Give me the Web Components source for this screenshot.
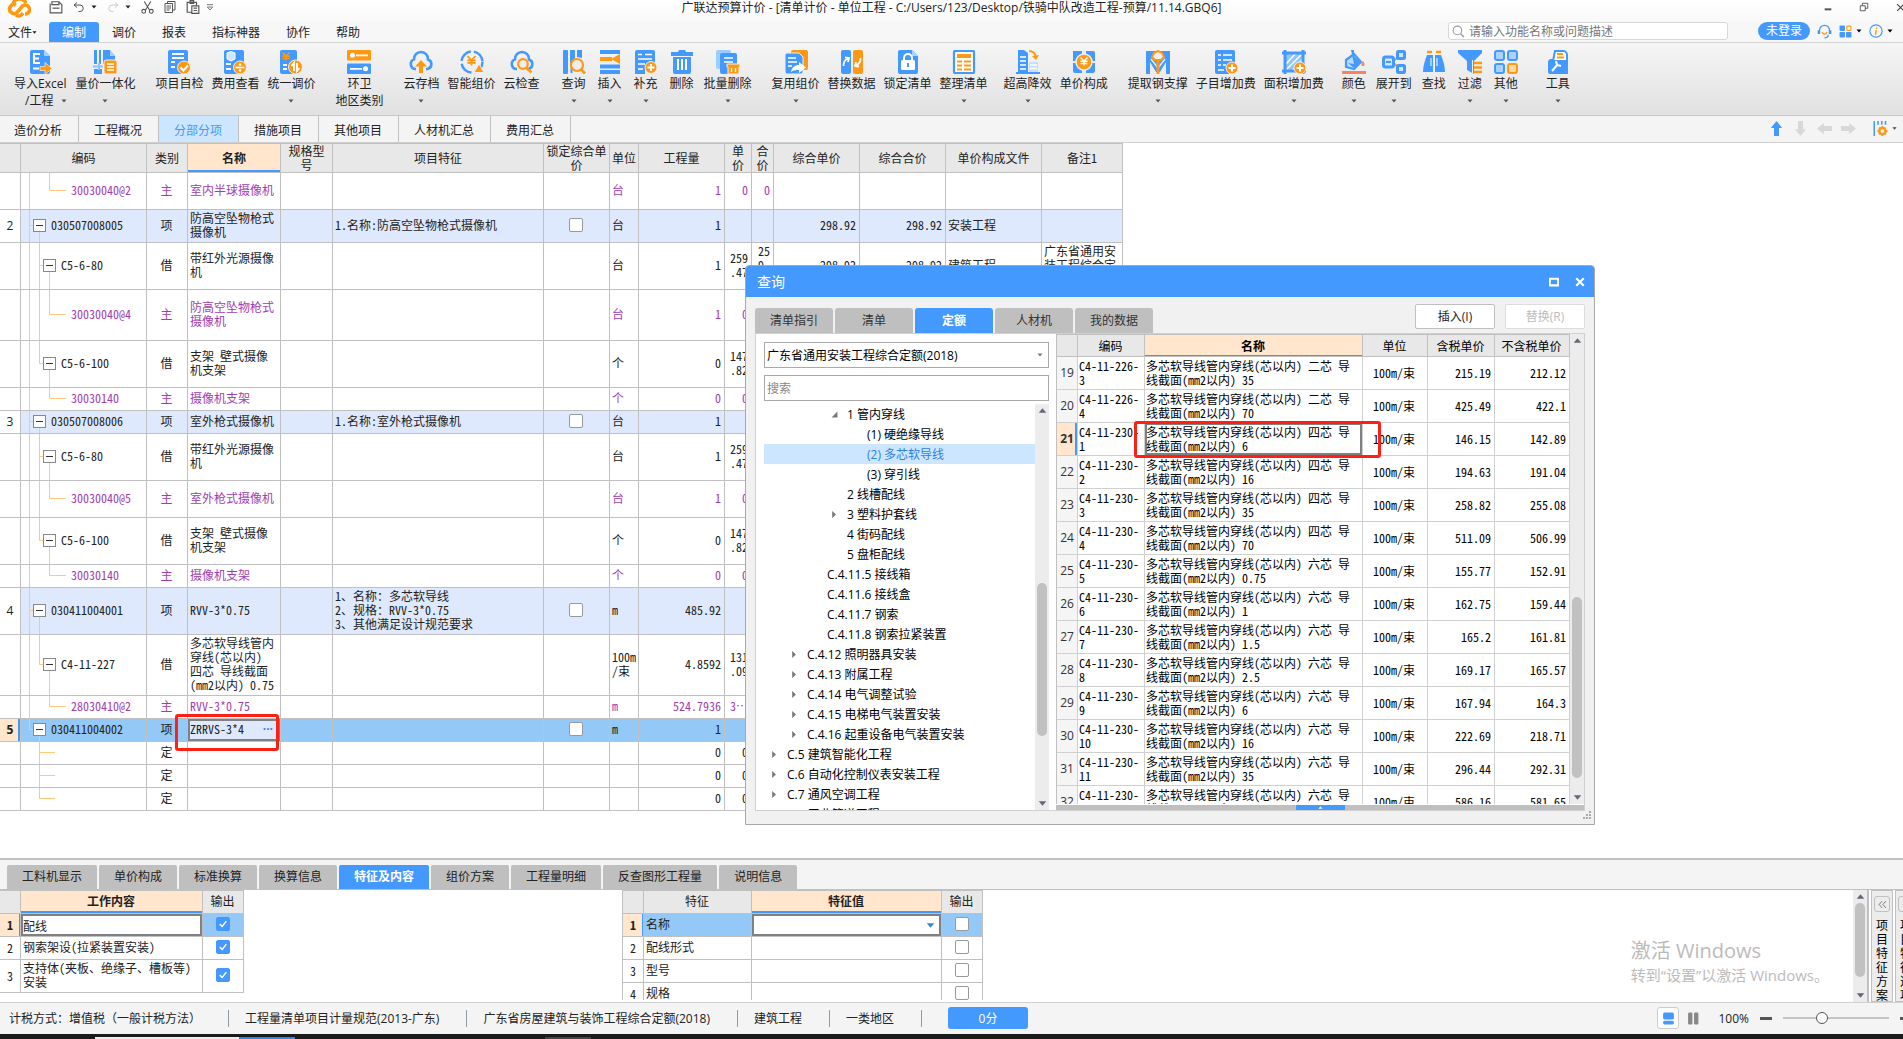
<!DOCTYPE html>
<html lang="zh-CN">
<head>
<meta charset="utf-8">
<title>广联达预算计价</title>
<style>
html,body{margin:0;height:100%}
body{
  --ui:"Open Sans","Noto Sans CJK SC",sans-serif;
  --grid:"Noto Sans Mono CJK SC","Noto Sans CJK SC",monospace;
  --blue:#4499ff;--orange:#ff9914;--line:#c0c0c0;--head:#e8e8e8;--peach:#ffe6cc;--item:#dee9fd;--pick:#93c8f7;
  font:12px/17px var(--ui);color:#222;overflow:hidden;background:#fff
}
</style>
</head>
<body>
<gd-app></gd-app>
<script>
const B = '#4499ff', O = '#ff9914';
const base = `*{box-sizing:border-box}:host{display:block}button,input,select{font:inherit;color:inherit;margin:0;padding:0;border:0;background:none;outline:0}
.cb{appearance:none;width:14px;height:14px;border:1px solid #999;border-radius:2px;background:#fff;display:block;margin:auto}
.cb:checked{border-color:${B};background:${B}}
table{border-collapse:separate;border-spacing:0;table-layout:fixed;font:12px/14px var(--grid)}
td,th{padding:0 3px 0 2px;border-right:1px solid var(--line);border-bottom:1px solid var(--line);font-weight:400;text-align:left;white-space:pre-line;overflow-wrap:anywhere}
th{background:var(--head);text-align:center}th.on{background:var(--peach);font-weight:700;box-shadow:inset 0 -2px ${B}}
.r{text-align:right}.c{text-align:center}`;

function define(tag, css, html) {
  customElements.define(tag, class extends HTMLElement {
    connectedCallback() {
      if (this.shadowRoot) return;
      const root = this.attachShadow({mode: 'open'});
      const t = document.createElement('template');
      t.innerHTML = `<style>${base}${css}</style>` + (typeof html === 'function' ? html(this) : html);
      root.append(t.content.cloneNode(true));
    }
  });
}

/* ---------- icons ---------- */
const doc = `<path fill="${B}" d="M4 0h12l6 6v16a2 2 0 0 1-2 2H4a2 2 0 0 1-2-2V2a2 2 0 0 1 2-2z"/>`;
const sheet = `<rect x="1" width="20" height="24" rx="2" fill="${B}"/>`;
const yen = (x, y, s, c) => `<path d="M${x-s} ${y-s}l${s} ${s}l${s}-${s}M${x} ${y}v${s*1.3}M${x-s} ${y+.2}h${s*2}M${x-s} ${y+s*.7}h${s*2}" fill="none" stroke="${c}" stroke-width="1.4"/>`;
const plus = (x, y) => `<circle cx="${x}" cy="${y}" r="6" fill="${O}" stroke="#eee"/><path d="M${x-3.5} ${y}h7M${x} ${y-3.5}v7" stroke="#fff" stroke-width="2"/>`;
const cloud = `<path d="M7 19H6a5 5 0 0 1-1-9.600A7 7 0 0 1 12 2a7 7 0 0 1 7 7.400A5 5 0 0 1 18.500 19H17" fill="none" stroke="${B}" stroke-width="2.600"/>`;
const ICONS = {
  import: doc + `<path fill="#a8d2ff" d="M16 0l6 6h-6z"/><path d="M12 4H6v9h6M6 8.500h5" fill="none" stroke="#fff" stroke-width="2"/><path d="M5 18.500h6" stroke="#fff" stroke-width="2"/><path fill="${O}" stroke="#eee" stroke-width=".7" d="M12 16.500h5v-4l7 6-7 6v-4h-5z"/>`,
  volume: `<path fill="${B}" d="M1 0h3v14H1zM1 19h8v5H1zM6 0h2v14H6zM10 0h7l5 6v8H10z"/><path fill="#a8d2ff" d="M17 0l5 6h-5z"/><path d="M0 16.500h10M6 13v7" stroke="#8cc2ff" stroke-width="2"/><rect x="11" y="10" width="13" height="14" rx="2" fill="${O}" stroke="#eee"/><path d="M14 14h7M14 17h7M14 20h7" stroke="#fff" stroke-width="1.600"/>`,
  check: sheet + `<path d="M5 4h12M5 8h12M4 12h4M4 17h4" stroke="#fff" stroke-width="2"/><circle cx="17" cy="17.500" r="6.500" fill="${O}" stroke="#eee"/><path d="M13.500 17.500l3 3 4.500-5" fill="none" stroke="#fff" stroke-width="2"/>`,
  fee: sheet + `<path fill="#cfe6ff" stroke="#fff" d="M4 3l4-1.500 4 1.500v6l-4 2-4-2z"/><path d="M3 14h5M3 19h5" stroke="#fff" stroke-width="1.800"/><circle cx="17" cy="17.500" r="6.500" fill="${O}" stroke="#eee"/><path d="M12.500 17.500h9" stroke="#fff" stroke-width="1.800"/><circle cx="17" cy="14.500" r="1.300" fill="#fff"/><circle cx="17" cy="20.500" r="1.300" fill="#fff"/>`,
  adjust: sheet.replace('width="20"','width="17"') + yen(7, 6, 3.500, O) + `<path d="M4 15h4M4 19h4" stroke="#fff" stroke-width="1.800"/><circle cx="16.500" cy="17" r="7" fill="${O}" stroke="#eee"/><path d="M15 21v-8l-2.500 3M18 13v8l2.500-3" fill="none" stroke="#fff" stroke-width="1.800"/>`,
  env: `<rect y="0" width="24" height="10.500" rx="1" fill="${O}"/><rect y="13.500" width="24" height="10.500" rx="1" fill="${B}"/><circle cx="5.500" cy="5.300" r="2.500" fill="#fff"/><path d="M9 5.300h12M3 18.800h12" stroke="#fff" stroke-width="1.800"/><circle cx="18.500" cy="18.800" r="2.500" fill="#fff"/>`,
  cloudup: cloud + `<path fill="${O}" d="M12 10l6 6.500h-4V23h-4v-6.500H6z"/>`,
  smart: `<circle cx="12" cy="12" r="10.500" fill="none" stroke="${B}" stroke-width="2.400" stroke-dasharray="14 3"/>` + yen(11.500, 10, 4, O) + yen(11.500, 10.300, 4, O) + `<path fill="${O}" stroke="#eee" d="M19 14l5 8.500h-10z"/>`,
  cloudfind: cloud + `<circle cx="13" cy="14" r="4.800" fill="#eee" stroke="${O}" stroke-width="2.200"/><path d="M16.500 18l5 4.500" stroke="${O}" stroke-width="2.600"/>`,
  query: `<rect x="1" width="5" height="24" rx="1" fill="${B}"/><path fill="${B}" d="M8 0h5v9l-5 5zM15 0h5v8l-5-1z"/><path d="M9.500 14v9" stroke="${B}" stroke-width="2"/><circle cx="15" cy="15" r="6" fill="#eee" stroke="${O}" stroke-width="2.200"/><path d="M19 19.500l4 4" stroke="${O}" stroke-width="2.600"/>`,
  insert: `<path d="M2 2h20M2 16.500h20M2 22h20" stroke="${B}" stroke-width="4"/><path d="M2 9h12" stroke="${O}" stroke-width="4"/><path fill="${O}" d="M13 9l9-5v10z"/>`,
  add: `<rect x="1" width="20" height="16" rx="2" fill="${B}"/><rect x="1" y="14" width="10" height="10" fill="${B}"/><path d="M4 4.500h4M11 4.500h7M4 9h14M4 14h7M4 19h5" stroke="#fff" stroke-width="1.500"/>` + plus(17, 17.500),
  del: `<path fill="${B}" d="M1 2h7l1-2h6l1 2h7v4H1zM3 7h18v15a2 2 0 0 1-2 2H5a2 2 0 0 1-2-2z"/><path d="M8 9v11M12 9v11M16 9v11" stroke="#fff" stroke-width="2"/>`,
  batchdel: `<rect width="15" height="19" rx="2" fill="#9dccff"/><rect x="4" y="3" width="17" height="21" rx="2" fill="${B}"/><path d="M8 8h9M8 12h9" stroke="#fff" stroke-width="1.600"/><path fill="${O}" stroke="#eee" d="M11 14h13v3h-1v7H12v-7h-1z"/><path d="M15.500 18v4M19.500 18v4" stroke="#fff" stroke-width="1.300"/>`,
  reuse: `<rect x="7" width="17" height="20" rx="2" fill="${O}"/><path fill="${B}" stroke="#eee" d="M3 3h12l4 4v15a2 2 0 0 1-2 2H3a2 2 0 0 1-2-2V5a2 2 0 0 1 2-2z"/><path d="M4 8h8M4 12h9M4 16h4" stroke="#fff" stroke-width="1.700"/><path fill="#fff" d="M7 22c1-5 4-7 8-7v-3l7 5.500-7 5.500v-3c-3 0-5 0-8 2z"/>`,
  replace: `<rect x="1" width="10" height="24" rx="2" fill="${B}"/><rect x="13" width="10" height="24" rx="2" fill="${O}"/><path d="M3.500 16c0-4 1-6 4-7M5 7.500l4 .5-1 4M20.500 8c0 4-1 6-4 7M19 16.500l-4-.5 1-4" fill="none" stroke="#fff" stroke-width="1.800"/>`,
  lock: doc + `<path fill="#a8d2ff" d="M16 0l6 6h-6z"/><rect x="5" y="10" width="14" height="10" rx="1.500" fill="#fff"/><path d="M8 11V8a4 4 0 0 1 8 0v3" fill="none" stroke="#fff" stroke-width="2"/><path d="M12 13v4" stroke="${B}" stroke-width="2"/>`,
  tidy: `<rect x="2" y="1" width="20" height="22" rx="1" fill="#fff" stroke="${B}" stroke-width="2.200"/><path d="M5 6h14" stroke="${O}" stroke-width="4"/><path d="M5 11.500h5M12 11.500h7M5 15.500h5M12 15.500h7M5 19.500h5M12 19.500h7" stroke="${O}" stroke-width="2"/>`,
  high: `<path fill="${B}" d="M2 0h6l4 3v19H2z"/><path d="M4 7h6M4 11h6M4 15h6M4 19h6" stroke="#fff" stroke-width="1.600"/><path fill="#c2e0ff" d="M13 12h9v10h-9z"/><path d="M14 15h7M14 18.500h7" stroke="#fff" stroke-width="1.300"/><path d="M0 23h24" stroke="${B}" stroke-width="2"/><path d="M13 1c4 0 6 2 7 6" fill="none" stroke="${O}" stroke-width="2"/><path fill="${O}" d="M16 6l7-1-3 5z"/>`,
  compose: `<path fill="${B}" d="M1 1h9v22H3a2 2 0 0 1-2-2zM14 1h7a2 2 0 0 1 2 2v18a2 2 0 0 1-2 2h-7z"/><path d="M0 12h24M12 0v24" stroke="#e9e9e9" stroke-width="2"/><circle cx="12" cy="12" r="8" fill="${O}" stroke="#eee" stroke-width="1.500"/>` + yen(12, 11, 3.500, '#fff'),
  steel: `<path fill="${B}" d="M0 1h24v23h-4V12l-6 10h-4L4 12v12H0z"/><path d="M12 24V12M5 9l7 9 7-9" fill="none" stroke="#eee" stroke-width="1.400"/><path d="M12 24V11" stroke="${O}" stroke-width="3"/><path fill="#eee" stroke="${O}" stroke-width="2" d="M8 3l4-2 4 2 2 4-3 3H9L6 7z"/>`,
  sub: sheet + `<path d="M4 5h3M9 5h9M4 10h3M9 10h9M4 15h3M9 15h3M4 20h6" stroke="#fff" stroke-width="1.600"/>` + plus(18, 18),
  area: `<path fill="#8fc4ff" d="M3 3h18v18H3z"/><path d="M4 14L14 3M4 20L20 4M10 21l11-12" stroke="#fff" stroke-width="1.500"/><path d="M3 0v24M21 0v24M0 3h24M0 21h24" stroke="${B}" stroke-width="3"/>` + plus(18, 18),
  color: `<path fill="#b9dbff" stroke="${B}" stroke-width="2.200" d="M4 10l8-6 7 8-7 7-8-2z"/><path fill="${B}" d="M9 0h3v6l6 6-6 6-6-5 6 1z"/><path fill="#f4845f" d="M21 11c2 3 2 5 0 5s-2-2 0-5z"/><path d="M0 22.500h24" stroke="#f4845f" stroke-width="3"/>`,
  expand: `<path d="M10 12L19 5M10 12l9 7" stroke="${O}" stroke-width="2"/><g fill="#cfe6ff" stroke="${B}" stroke-width="3"><rect x="1.500" y="7" width="10" height="10" rx="2"/><rect x="15.500" y="1.500" width="7" height="7" rx="1"/><rect x="15.500" y="15.500" width="7" height="7" rx="1"/></g><path d="M4 12h5" stroke="${B}" stroke-width="2"/>`,
  find: `<path fill="${B}" d="M5 5h6v17H1C1 16 3 10 5 5zM13 5h6c2 5 4 11 4 17H13z"/><path d="M5 2h5M14 2h5" stroke="${O}" stroke-width="2.600"/><path d="M9 8v8M15 8v8" stroke="#fff"/>`,
  filter: `<path fill="${B}" d="M0 0h24v3l-8 8v13l-7-4v-9L0 3z"/><path d="M16 13h8M16 17.500h8M16 22h8" stroke="${O}" stroke-width="2.400"/><path d="M14.500 10v14" stroke="#eee"/>`,
  other: `<g fill="#a8d2ff" stroke="${B}" stroke-width="2"><rect x="1" y="1" width="9" height="9" rx="2"/><rect x="14" y="1" width="9" height="9" rx="2"/><rect x="1" y="14" width="9" height="9" rx="2"/><rect x="14" y="14" width="9" height="9" rx="2" fill="#ffd9a3" stroke="${O}"/></g>`,
  tool: `<path fill="${B}" d="M4 9h16a2 2 0 0 1 2 2v13H4a2 2 0 0 1-2-2V11z"/><path fill="#fff" stroke="${B}" stroke-width="2" d="M9 1h8a4 4 0 0 1 4 4v6H7z"/><path d="M11 4h6M11 7.500h7" stroke="${O}" stroke-width="1.800"/><path d="M6 21l6-7M10 11l1 4 4 1" fill="none" stroke="#fff" stroke-width="2"/>`,
  logo: `<path d="M9 10a4.500 4.500 0 1 0 1 7.500l6-7a4.500 4.500 0 1 1 2 8.500M6 9a7 7 0 0 1 13-1M9 20c3 2 5 1 7-2" fill="none" stroke="${O}" stroke-width="3.600"/>`,
  save: `<path d="M2 6V22h20V8l-5-5H5v5h12V3" fill="none" stroke="#555" stroke-width="2"/><path d="M6 14h12" stroke="#555" stroke-width="2"/>`,
  undo: `<path d="M8 3L2 8l6 5M2 8h12a6 6 0 0 1 0 13h-3" fill="none" stroke="#555" stroke-width="2"/>`,
  redo: `<path d="M16 3l6 5-6 5M22 8H10a6 6 0 0 0 0 13h3" fill="none" stroke="#ccc" stroke-width="2"/>`,
  cut: `<path d="M6 1l10 16M18 1L8 17" stroke="#555" stroke-width="2"/><circle cx="5" cy="19" r="3.500" fill="none" stroke="#555" stroke-width="2"/><circle cx="19" cy="19" r="3.500" fill="none" stroke="#555" stroke-width="2"/>`,
  copy: `<path d="M7 4V1h15v17h-4M2 5h15v18H2zM5 10h9M5 14h9M5 18h6" fill="none" stroke="#555" stroke-width="2"/>`,
  paste: `<path d="M9 21H2V4h16v5M7 1h6v5H7zM10 10h12v13H10zM13 14h6M13 18h6" fill="none" stroke="#555" stroke-width="2"/>`,
  more: `<path d="M3 5h18" stroke="#777" stroke-width="3"/><path d="M4 12h16l-8 9z" fill="none" stroke="#777" stroke-width="3"/>`,
  min: `<path d="M2 16h20" stroke="#555" stroke-width="6"/>`,
  restore: `<path d="M3 9h12v12H3zM8 9V3h13v12h-6" fill="none" stroke="#444" stroke-width="2"/>`,
  close: `<path d="M3 3l18 18M21 3L3 21" stroke="#444" stroke-width="3"/>`,
  wmax: `<path d="M2 4h20v16H2z" fill="none" stroke="#fff" stroke-width="5"/>`,
  wclose: `<path d="M3 3l18 18M21 3L3 21" stroke="#fff" stroke-width="5"/>`,
  search: `<circle cx="10" cy="10" r="8" fill="none" stroke="#999" stroke-width="2"/><path d="M16 16l6 6" stroke="#999" stroke-width="2.500"/>`,
  headset: `<path d="M4 15V10a8 8 0 0 1 16 0v5M18 17c0 4-3 5-6 5" fill="none" stroke="${B}" stroke-width="2"/><path d="M3 10v6M21 10v6" stroke="${B}" stroke-width="4"/><path d="M8 13c2 4 6 4 8 0" fill="none" stroke="${O}" stroke-width="2"/>`,
  apps: `<rect x="1" y="1" width="10" height="10" rx="1.500" fill="${B}"/><rect x="1" y="13" width="10" height="10" rx="1.500" fill="${B}"/><rect x="13" y="13" width="10" height="10" rx="1.500" fill="${B}"/><rect x="14.500" y="2" width="7.500" height="8" rx="1" fill="none" stroke="${O}" stroke-width="2"/>`,
  info: `<circle cx="12" cy="12" r="10.500" fill="none" stroke="${B}" stroke-width="2"/><circle cx="13" cy="7" r="1.500" fill="${O}"/><path d="M12.500 10.500l-1.500 8" stroke="${O}" stroke-width="2.500"/>`,
  up: `<path fill="${B}" d="M12 0l9 11h-5v13H8V11H3z"/>`,
  down: `<path fill="#d8d8d8" d="M12 24l9-11h-5V0H8v13H3z"/>`,
  left: `<path fill="#d8d8d8" d="M0 12l11-9v5h13v8H11v5z"/>`,
  right: `<path fill="#d8d8d8" d="M24 12l-11-9v5H0v8h13v5z"/>`,
  colset: `<path d="M2 0v24" stroke="${B}" stroke-width="2.500"/><path d="M8 0v6M14 0v6M20 0v6" stroke="${B}" stroke-width="2.500"/><circle cx="15" cy="16" r="5" fill="none" stroke="${O}" stroke-width="4"/><path d="M15 8v3M15 21v3M7 16h3M20 16h3M9.500 10.500l2 2M20.500 10.500l-2 2M9.500 21.500l2-2M20.500 21.500l-2-2" stroke="${O}" stroke-width="3"/>`,
  stack: `<rect x="2" y="1" width="20" height="13" rx="3" fill="${B}"/><rect x="2" y="16" width="20" height="7" rx="3" fill="${B}"/>`,
  cols: `<rect x="2" y="1" width="8" height="22" rx="2" fill="#888"/><rect x="13" y="1" width="8" height="22" rx="2" fill="#888"/>`,
  caret: `<path fill="currentColor" d="M2 6h20L12 18z"/>`,
  caretup: `<path fill="currentColor" d="M2 18h20L12 6z"/>`,
  caretr: `<path fill="currentColor" d="M4 0v24l13-12z"/>`,
  open: `<path fill="currentColor" d="M22 2v20H2z"/>`,
  tick: `<path d="M4 12l6 6L20 5" fill="none" stroke="#fff" stroke-width="3.500"/>`,
  chev: `<path d="M11 3l-8 9 8 9M21 3l-8 9 8 9" fill="none" stroke="#555" stroke-width="2"/>`
};
define('gd-icon', ':host{display:inline-block;flex:none;line-height:0}svg{display:block}',
  el => { const s = el.getAttribute('size') || 24; return `<svg width="${s}" height="${s}" viewBox="0 0 24 24" aria-hidden="true">${ICONS[el.getAttribute('name')]}</svg>`; });

/* ---------- title bar ---------- */
define('gd-title-bar', `:host{height:22px;background:linear-gradient(#fff,#f9f9f9);overflow:hidden}
.bar{display:grid;grid-template-columns:1fr auto 1fr;grid-template-rows:14px;height:22px;align-items:center}
.q{display:flex;align-items:center;padding-left:7px;height:14px}.q button{display:flex}
.q .s{margin-left:18px}.q .g{margin-left:10px}.q .n{margin-left:6px}
.w{display:flex;justify-content:flex-end;gap:27px;align-items:center;margin-right:-2px}`,
  `<div class="bar"><div class="q"><gd-icon name="logo"></gd-icon>
  <button class="s" aria-label="保存"><gd-icon name="save" size="14"></gd-icon></button>
  <button class="g" aria-label="撤销"><gd-icon name="undo" size="12"></gd-icon></button><button class="n" aria-label="撤销列表"><gd-icon name="caret" size="6"></gd-icon></button>
  <button class="g" aria-label="重做"><gd-icon name="redo" size="12"></gd-icon></button><button class="n" aria-label="重做列表"><gd-icon name="caret" size="6"></gd-icon></button>
  <button class="g" aria-label="剪切"><gd-icon name="cut" size="13"></gd-icon></button>
  <button class="g" aria-label="复制"><gd-icon name="copy" size="12"></gd-icon></button>
  <button class="g" aria-label="粘贴"><gd-icon name="paste" size="14"></gd-icon></button>
  <button class="n" aria-label="自定义"><gd-icon name="more" size="8"></gd-icon></button></div>
  <div>广联达预算计价 - [清单计价 - 单位工程 - C:/Users/123/Desktop/铁骑中队改造工程-预算/11.14.GBQ6]</div>
  <div class="w"><button aria-label="最小化"><gd-icon name="min" size="8"></gd-icon></button><button aria-label="还原"><gd-icon name="restore" size="10"></gd-icon></button><button aria-label="关闭"><gd-icon name="close" size="9"></gd-icon></button></div></div>`);

/* ---------- menu ---------- */
define('gd-menu-bar', `:host{height:21px;border-bottom:1px solid #d4d4d4;background:#f7f7f7}
.bar{display:flex;height:20px;align-items:stretch}
button{padding:0 13px}.f{padding:0 12px 0 8px;display:flex;align-items:center}.on{background:var(--blue);color:#fff;border-radius:3px 3px 0 0}
.rt{margin-left:auto;display:flex;align-items:center;padding:0 10px 2px 0}
label{display:flex;align-items:center;gap:4px;width:280px;height:18px;border:1px solid #d8d8d8;border-radius:3px;background:#fff;padding:0 3px;margin-right:30px}
input{flex:1;min-width:0}input::placeholder{color:#777;opacity:1}
.lg{height:18px;background:var(--blue);color:#fff;border-radius:9px;padding:0 8px;line-height:18px}.i,.v{padding:0;display:flex;margin-left:7px;color:#000}.v{margin-left:4px}`,
  `<nav class="bar"><button class="f">文件<gd-icon name="caret" size="5"></gd-icon></button><button class="on">编制</button><button>调价</button><button>报表</button><button>指标神器</button><button>协作</button><button>帮助</button>
  <div class="rt"><label><gd-icon name="search" size="13"></gd-icon><input aria-label="搜索功能" placeholder="请输入功能名称或问题描述"></label>
  <button class="lg">未登录</button><button class="i" aria-label="客服"><gd-icon name="headset" size="15"></gd-icon></button><button class="i" aria-label="应用"><gd-icon name="apps" size="13"></gd-icon></button><button class="v" aria-label="应用列表"><gd-icon name="caret" size="6"></gd-icon></button><button class="i" aria-label="帮助信息"><gd-icon name="info" size="14"></gd-icon></button><button class="v" aria-label="帮助列表"><gd-icon name="caret" size="6"></gd-icon></button></div></nav>`);

/* ---------- ribbon ---------- */
define('gd-tool', `:host{display:block}button{display:flex;flex-direction:column;align-items:center;padding:0 4px;min-width:36px;white-space:nowrap;line-height:17px}
.l{margin-top:1px}.b{display:flex;align-items:center;gap:8px;height:17px;color:#555}.t{color:#222}.x{margin-left:12px}`,
  el => `<button><gd-icon name="${el.getAttribute('icon')}"></gd-icon><span class="l"><slot></slot></span>${el.hasAttribute('menu') || el.hasAttribute('sub') ? `<span class="b">${el.hasAttribute('sub') ? `<span class="t${el.hasAttribute('menu') ? ' x' : ''}">${el.getAttribute('sub')}</span>` : ''}${el.hasAttribute('menu') ? '<gd-icon name="caret" size="6"></gd-icon>' : ''}</span>` : ''}</button>`);
const T = (i, n, m, s) => `<gd-tool icon="${i}"${m ? ' menu' : ''}${s ? ` sub="${s}"` : ''}>${n}</gd-tool>`;
define('gd-ribbon', `:host{height:73px;border-bottom:1px solid #c8c8c8;background:linear-gradient(#f5f5f5,#e1e1e1)}
.bar{display:flex;padding:7px 0 0 9px}.g{display:flex;margin-right:12px}.s{margin-right:8px}.m{margin-right:16px}`,
  `<div class="bar"><div class="g">${T('import','导入Excel',1,'/工程')}${T('volume','量价一体化',1)}</div>
  <div class="g">${T('check','项目自检')}${T('fee','费用查看')}${T('adjust','统一调价',1)}</div>
  <div class="g">${T('env','环卫',0,'地区类别')}</div>
  <div class="g">${T('cloudup','云存档',1)}${T('smart','智能组价')}${T('cloudfind','云检查')}</div>
  <div class="g">${T('query','查询',1)}${T('insert','插入',1)}${T('add','补充',1)}${T('del','删除')}${T('batchdel','批量删除',1)}</div>
  <div class="g s">${T('reuse','复用组价',1)}${T('replace','替换数据')}${T('lock','锁定清单')}${T('tidy','整理清单',1)}</div>
  <div class="g">${T('high','超高降效',1)}${T('compose','单价构成')}</div>
  <div class="g s">${T('steel','提取钢支撑',1)}${T('sub','子目增加费')}${T('area','面积增加费',1)}</div>
  <div class="g m">${T('color','颜色',1)}${T('expand','展开到',1)}${T('find','查找')}${T('filter','过滤',1)}${T('other','其他',1)}</div>
  <div class="g">${T('tool','工具',1)}</div></div>`);

/* ---------- page tabs ---------- */
define('gd-page-tabs', `:host{height:27px;border-bottom:1px solid #d0d0d0;background:#f4f4f4}
.bar{display:flex;height:26px}.t{padding:3px 16px 0 15px;border-right:1px solid var(--line)}.t:first-child{padding-left:14px}.on{background:#cce6ff;color:var(--blue)}
.rt{margin-left:auto;display:flex;align-items:center;gap:9px;padding:0 6px 2px 0;color:#444}.rt button{display:flex}.rt .k{gap:4px;display:flex;padding-left:8px;align-items:center}`,
  `<nav class="bar"><button class="t">造价分析</button><button class="t">工程概况</button><button class="t on">分部分项</button><button class="t">措施项目</button><button class="t">其他项目</button><button class="t">人材机汇总</button><button class="t">费用汇总</button>
  <div class="rt"><button aria-label="上移"><gd-icon name="up" size="15"></gd-icon></button><button aria-label="下移"><gd-icon name="down" size="15"></gd-icon></button><button aria-label="后退"><gd-icon name="left" size="15"></gd-icon></button><button aria-label="前进"><gd-icon name="right" size="15"></gd-icon></button><button class="k" aria-label="列设置"><gd-icon name="colset" size="15"></gd-icon><gd-icon name="caret" size="5"></gd-icon></button></div></nav>`);

/* ---------- bill sheet ---------- */
/* g: guide lines as x + mode (f full, t top half, b bottom half); h: horizontal branch from,to */
const V = {
  leaf: {g:[[8,'f'],[28,'t']], h:[28,45], lv:3}, leafm: {g:[[8,'f'],[18,'f'],[28,'t']], h:[28,45], lv:3},
  item: {g:[[8,'f'],[18,'b']], h:[8,12], lv:1}, itemz: {g:[[8,'t'],[18,'b']], h:[8,12], lv:1},
  sub: {g:[[8,'f'],[18,'f'],[28,'b']], h:[18,22], lv:2}, subz: {g:[[8,'f'],[18,'t'],[28,'b']], h:[18,22], lv:2},
  gap: {g:[[18,'f']], h:[18,34], lv:4}, gapz: {g:[[18,'t']], h:[18,34], lv:4}
};
const ROWS = [
  [37,'leaf','','30030040@2','主','室内半球摄像机','','台','1','0','0'],
  [33,'item','2','030507008005','项','防高空坠物枪式摄像机','1.名称:防高空坠物枪式摄像机','台','1','','','298.92','298.92','安装工程'],
  [47,'sub','','C5-6-80','借','带红外光源摄像机','','台','1','259\n.47','25\n9.\n47','298.92','298.92','建筑工程','广东省通用安装工程综合定额(2018)'],
  [51,'leafm','','30030040@4','主','防高空坠物枪式摄像机','','台','1','0'],
  [47,'subz','','C5-6-100','借','支架 壁式摄像机支架','','个','0','147\n.82'],
  [23,'leaf','','30030140','主','摄像机支架','','个','0','0'],
  [23,'item','3','030507008006','项','室外枪式摄像机','1.名称:室外枪式摄像机','台','1'],
  [47,'sub','','C5-6-80','借','带红外光源摄像机','','台','1','259\n.47'],
  [37,'leafm','','30030040@5','主','室外枪式摄像机','','台','1','0'],
  [47,'subz','','C5-6-100','借','支架 壁式摄像机支架','','个','0','147\n.82'],
  [23,'leaf','','30030140','主','摄像机支架','','个','0','0'],
  [47,'item','4','030411004001','项','RVV-3*0.75','1、名称：多芯软导线\n2、规格：RVV-3*0.75\n3、其他满足设计规范要求','m','485.92'],
  [61,'subz','','C4-11-227','借','多芯软导线管内\n穿线(芯以内)\n四芯 导线截面\n(mm2以内) 0.75','','100m\n/束','4.8592','131\n.09'],
  [23,'leaf','','28030410@2','主','RVV-3*0.75','','m','524.7936','3…'],
  [23,'itemz','5','030411004002','项','ZRRVS-3*4','','m','1'],
  [23,'gap','','','定','','','','0','0'],[23,'gap','','','定','','','','0','0'],[23,'gapz','','','定','','','','0','0']
];
function guides(v, h) {
  const c = h / 2 - .5;
  const d = v.g.map(([x, m]) => `M${x + .5} ${m === 'b' ? c : 0}V${m === 't' ? c : h}`).join('') + `M${v.h[0] + .5} ${c}H${v.h[1]}`;
  return `<svg width="125" height="${h}" aria-hidden="true"><path d="${d}" fill="none" stroke="#ffc97d"/></svg>`;
}
define('gd-bill-sheet', `:host{flex:none}table{width:1123px}thead th{height:30px;border-top:1px solid var(--line);padding:0 2px}thead th.on{box-shadow:inset 0 -2px var(--blue)}
tbody td{padding-bottom:2px}td.u{padding:0 2px 2px;white-space:pre}
tr.item td{background:var(--item)}tr.item td.n,tr.cur td.n{background:#fff}tr.leaf td{color:#a23db0}tr.cur td{background:var(--pick)}
td.n{text-align:center;font-family:var(--ui);padding:0}tr.cur td.n{background:var(--peach);font-weight:700;box-shadow:inset -2px 0 var(--blue)}
td.code{padding:0}.k{display:grid;align-items:center}.k>*{grid-area:1/1}.k svg{display:block}.k span{display:flex;align-items:center;gap:5px;padding:0 0 2px 50px}
.k .l1{padding-left:12px}.k .l2{padding-left:22px}
button.tg{width:13px;height:13px;border:1px solid #888;background:#fff linear-gradient(#333,#333) center/7px 1px no-repeat}
tr.cur td.name{position:relative;background:var(--item);box-shadow:inset 0 0 0 2px #808080}.ed{display:flex;justify-content:space-between;white-space:nowrap}.ed button{color:#3a86d0;font:700 12px/14px var(--ui);padding-right:4px}
.mark{position:absolute;inset:-5px 1px -10px -13px;border:3px solid #ff2015;border-radius:3px;pointer-events:none}`,
  () => {
    const w = [21,126,41,93,52,211,66,29,86,27,22,86,86,96,81];
    const hs = ['','编码','类别','名称','规格型号','项目特征','锁定综合单价','单位','工程量','单价','合价','综合单价','综合合价','单价构成文件','备注1'];
    const body = ROWS.map(([h, k, n, code, type, name, feat, unit, qty, a = '', b = '', p1 = '', p2 = '', file = '', note = '']) => {
      const v = V[k], item = v.lv === 1, cur = n === '5';
      return `<tr class="${cur ? 'cur' : item ? 'item' : v.lv === 3 ? 'leaf' : ''}" style="height:${h}px"><td class="n">${n}</td>
      <td class="code"><div class="k">${guides(v, h - 1)}<span class="l${v.lv}">${v.lv < 3 ? '<button class="tg" aria-label="折叠"></button>' : ''}${code}</span></div></td>
      <td class="c">${type}</td><td class="name">${cur ? `<div class="ed">${name}<button>···</button></div><div class="mark"></div>` : name}</td><td></td><td>${feat}</td>
      <td>${item ? '<input type="checkbox" class="cb" aria-label="锁定综合单价">' : ''}</td><td class="u">${unit}</td><td class="r">${qty}</td><td class="r">${a}</td><td class="r">${b}</td>
      <td class="r">${p1}</td><td class="r">${p2}</td><td>${file}</td><td>${note}</td></tr>`.replace(/>\s*\n\s+</g, '><');
    }).join('');
    return `<table><colgroup>${w.map(x => `<col style="width:${x}px">`).join('')}</colgroup><thead><tr>${hs.map((t, i) => `<th${i === 3 ? ' class="on"' : ''}>${t}</th>`).join('')}</tr></thead><tbody>${body}</tbody></table>`;
  });

/* ---------- scrollbar ---------- */
define('gd-scroll', `:host{width:14px;background:#ececec;display:flex;flex-direction:column;align-items:center;color:#667;flex:none}
gd-icon{padding:2px 0}i{width:10px;border-radius:5px;background:#c1c1c1}`,
  el => { const [a, b, c] = el.getAttribute('parts').split(','); return `<gd-icon name="caretup" size="9"></gd-icon><b style="flex:${a}"></b><i style="flex:${b}"></i><b style="flex:${c}"></b><gd-icon name="caret" size="9"></gd-icon>`; });

/* ---------- quota tree ---------- */
define('gd-tree', `:host{overflow:hidden;flex:1;min-width:0;color:#000}ul{list-style:none;margin:0;padding:0}
li{display:flex;align-items:center;height:20px;white-space:pre}li gd-icon,li b{width:16px;flex:none;color:#777}li.on{background:#cce6ff;color:#2f80e0}
.d0{padding-left:7px}.d1{padding-left:27px}.d2{padding-left:47px}.d3{padding-left:67px}.d4{padding-left:87px}`,
  () => '<ul>' + [[3,'o','1 管内穿线'],[4,'','(1) 硬绝缘导线'],[4,'','(2) 多芯软导线',1],[4,'','(3) 穿引线'],[3,'','2 线槽配线'],[3,'c','3 塑料护套线'],[3,'','4 街码配线'],[3,'','5 盘柜配线'],
    [2,'','C.4.11.5 接线箱'],[2,'','C.4.11.6 接线盒'],[2,'','C.4.11.7 钢索'],[2,'','C.4.11.8 钢索拉紧装置'],
    [1,'c','C.4.12 照明器具安装'],[1,'c','C.4.13 附属工程'],[1,'c','C.4.14 电气调整试验'],[1,'c','C.4.15 电梯电气装置安装'],[1,'c','C.4.16 起重设备电气装置安装'],
    [0,'c','C.5 建筑智能化工程'],[0,'c','C.6 自动化控制仪表安装工程'],[0,'c','C.7 通风空调工程'],[0,'c','C.8 工业管道工程']]
    .map(([d, m, t, on]) => `<li class="d${d}${on ? ' on' : ''}">${m ? `<gd-icon name="${m === 'o' ? 'open' : 'caretr'}" size="7"></gd-icon>` : '<b></b>'}<span>${t}</span></li>`).join('') + '</ul>');

/* ---------- quota result grid ---------- */
const Q = [[19,'226-3','二',35,'215.19','212.12'],[20,'226-4','二',70,'425.49','422.1'],[21,'230-1','四',6,'146.15','142.89'],[22,'230-2','四',16,'194.63','191.04'],[23,'230-3','四',35,'258.82','255.08'],[24,'230-4','四',70,'511.09','506.99'],
  [25,'230-5','六','0.75','155.77','152.91'],[26,'230-6','六',1,'162.75','159.44'],[27,'230-7','六','1.5','165.2','161.81'],[28,'230-8','六','2.5','169.17','165.57'],[29,'230-9','六',6,'167.94','164.3'],[30,'230-10','六',16,'222.69','218.71'],[31,'230-11','六',35,'296.44','292.31'],[32,'230-12','六',70,'586.16','581.65']];
define('gd-quota-grid', `:host{flex:1;min-width:0;overflow:hidden;color:#000;border-left:1px solid var(--line)}table{width:100%}
th{height:23px;border-top:1px solid var(--line)}th.on{box-shadow:inset 0 -1px var(--blue)}td{height:33px;padding:0 3px 1px 1px;border-color:#d0d0d0}td.n{background:#f5f5f5;font-family:var(--ui);text-align:center;padding:0;color:#333}
tr.cur td.n{background:var(--peach);font-weight:700;box-shadow:inset -2px 0 var(--blue)}tr.cur td.nm{position:relative;box-shadow:inset 0 0 0 2px #808080}
.mark{position:absolute;inset:-2px -19px -3px -11px;border:3px solid #ff2015;border-radius:3px;pointer-events:none}`,
  () => `<table><colgroup><col style="width:21px"><col style="width:67px"><col><col style="width:65px"><col style="width:67px"><col style="width:75px"></colgroup>
  <thead><tr><th></th><th>编码</th><th class="on">名称</th><th>单位</th><th>含税单价</th><th>不含税单价</th></tr></thead><tbody>` +
  Q.map(([n, c, k, s, a, b]) => `<tr${n === 21 ? ' class="cur"' : ''}><td class="n">${n}</td><td>C4-11-${c.replace('-', '-\n')}</td><td class="nm">多芯软导线管内穿线(芯以内) ${k}芯 导\n线截面(mm2以内) ${s}${n === 21 ? '<div class="mark"></div>' : ''}</td><td class="c">100m/束</td><td class="r">${a}</td><td class="r">${b}</td></tr>`).join('') + '</tbody></table>');

/* ---------- query dialog ---------- */
define('gd-query-dialog', `:host{display:flex;flex-direction:column;background:#f1f1f1;border:1px solid #a8a8a8;border-radius:4px 4px 0 0;overflow:hidden}
header{height:31px;background:var(--blue);color:#fff;font-size:14px;display:flex;align-items:center;padding:0 9px 0 11px}header span{flex:1}header button{display:flex;margin-left:16px}
.tabs{display:flex;gap:2px;padding:7px 9px 0;align-items:flex-end;height:36px}.tabs .t{width:78px;height:25px;background:#bfbfbf;border-radius:3px 3px 0 0;color:#333}.tabs .on{background:var(--blue);color:#fff;font-weight:700}
.bt{margin-left:auto;display:flex;gap:10px;align-self:flex-start}.bt button{width:80px;height:25px;border:1px solid var(--line);border-radius:2px;background:#fff}.bt button:disabled{color:#bbb;border-color:#ddd}
.panel{flex:1;min-height:0;display:flex;margin:0 9px;border:1px solid #d0d0d0;background:#fff}
.l{width:294px;display:flex;flex-direction:column;padding:8px 0 0 8px}
.box{height:26px;border:1px solid #aaa;width:285px;color:#000;position:relative;display:flex;align-items:center;background:#fff}.box+.box{margin:7px 0 3px}
.box select,.box input{appearance:none;width:100%;height:24px;padding:0 2px}.box gd-icon{margin-right:5px;color:#777}input::placeholder{color:#888;opacity:1}
.tr{flex:1;min-height:0;display:flex;width:285px}.r{flex:1;min-width:0;margin-left:6px;display:flex;flex-direction:column;text-align:left}.gr{flex:1;min-height:0;display:flex}
.sp{height:5px;margin-top:1px;background:#bfbfbf;display:flex;justify-content:center}.sp b{width:49px;background:var(--blue);color:#fff;display:flex;justify-content:center}
footer{height:13px;display:flex;justify-content:flex-end;align-items:flex-start;padding-right:3px}`,
  `<header><span>查询</span><button aria-label="最大化"><gd-icon name="wmax" size="10"></gd-icon></button><button aria-label="关闭"><gd-icon name="wclose" size="10"></gd-icon></button></header>
  <div class="tabs"><button class="t">清单指引</button><button class="t">清单</button><button class="t on">定额</button><button class="t">人材机</button><button class="t">我的数据</button><div class="bt"><button>插入(I)</button><button disabled>替换(R)</button></div></div>
  <div class="panel"><div class="l"><div class="box"><select aria-label="定额库"><option>广东省通用安装工程综合定额(2018)</option></select><gd-icon name="caret" size="6"></gd-icon></div><div class="box"><input aria-label="搜索定额" placeholder="搜索"></div>
  <div class="tr"><gd-tree></gd-tree><gd-scroll parts="166,152,61"></gd-scroll></div></div>
  <div class="r"><div class="gr"><gd-quota-grid></gd-quota-grid><gd-scroll parts="248,180,13"></gd-scroll></div><div class="sp"><b><gd-icon name="caretup" size="5"></gd-icon></b></div></div></div>
  <footer><svg width="8" height="8" fill="#aaa" aria-hidden="true"><path d="M6 0h2v2h-2zM3 3h2v2h-2zM6 3h2v2h-2zM0 6h2v2h-2zM3 6h2v2h-2zM6 6h2v2h-2z"/></svg></footer>`);

/* ---------- detail panel ---------- */
const chk = (t, on) => `<span class="ck"><input type="checkbox" class="cb" aria-label="${t}"${on ? ' checked' : ''}>${on ? '<gd-icon name="tick" size="10"></gd-icon>' : ''}</span>`;
define('gd-detail-panel', `:host{border-top:2px solid var(--line);background:#f4f4f4}
.tabs{display:flex;gap:2px;height:30px;padding:5px 7px 0;border-bottom:1px solid var(--line)}.tabs button{height:24px;padding:0 15px 1px;background:#bfbfbf;border-radius:2px 2px 0 0;color:#222}.tabs .on{background:var(--blue);color:#fff;font-weight:700}
.body{height:112px;display:flex;background:#fff;overflow:hidden}.a{flex:0 1 622px}.b{flex:1;display:flex;height:110px;overflow:hidden}table{width:244px}.b table{width:361px;border-left:1px solid var(--line);flex:none}
th,td{height:23px;padding-bottom:2px}thead th{height:24px;border-top:1px solid var(--line)}td.n{text-align:center;padding:0}tr.cur td{background:var(--pick)}tr.cur td.n{background:var(--peach);font-weight:700;box-shadow:inset -1px 0 var(--blue)}
tr.cur td.e{background:#fff;box-shadow:inset 0 0 0 2px #808080;padding:0 2px}td.e input{width:100%;height:18px;display:block}td.e label{display:flex;align-items:center;color:#3a86c8;padding-right:4px}td.e select{appearance:none;flex:1;height:18px}
.ck{display:grid;place-items:center}.ck>*{grid-area:1/1}.ck gd-icon{pointer-events:none}
.wm{margin:48px 24px 0 auto;font-size:15px;line-height:22px;color:#bbb;white-space:nowrap}.wm b{display:block;font-weight:400;font-size:20px;line-height:26px}
.side{display:flex;gap:2px;width:36px;border-left:2px solid var(--line);padding-left:2px;flex:none;overflow:hidden}.side div{width:22px;flex:none;border:1px solid var(--line);background:#ececec;display:flex;flex-direction:column;align-items:center;padding-top:5px;font:12px/14px var(--grid);color:#000}.side button{width:16px;height:16px;border:1px solid var(--line);border-radius:3px;display:grid;place-items:center;margin-bottom:6px;flex:none}.side span{width:12px;overflow-wrap:anywhere}`,
  `<nav class="tabs"><button>工料机显示</button><button>单价构成</button><button>标准换算</button><button>换算信息</button><button class="on">特征及内容</button><button>组价方案</button><button>工程量明细</button><button>反查图形工程量</button><button>说明信息</button></nav>
  <div class="body"><div class="a"><table><colgroup><col style="width:21px"><col><col style="width:41px"></colgroup><thead><tr><th></th><th class="on">工作内容</th><th>输出</th></tr></thead>
  <tbody><tr class="cur"><td class="n">1</td><td class="e"><input aria-label="工作内容" value="配线"></td><td>${chk('输出', 1)}</td></tr>
  <tr><td class="n">2</td><td>钢索架设(拉紧装置安装)</td><td>${chk('输出', 1)}</td></tr><tr style="height:33px"><td class="n">3</td><td>支持体(夹板、绝缘子、槽板等)安装</td><td>${chk('输出', 1)}</td></tr></tbody></table></div>
  <div class="b"><table><colgroup><col style="width:21px"><col style="width:108px"><col><col style="width:41px"></colgroup><thead><tr><th></th><th>特征</th><th class="on">特征值</th><th>输出</th></tr></thead>
  <tbody><tr class="cur"><td class="n">1</td><td>名称</td><td class="e"><label><select aria-label="特征值"><option></option></select><gd-icon name="caret" size="9"></gd-icon></label></td><td>${chk('输出')}</td></tr>
  ${['配线形式','型号','规格'].map((t, i) => `<tr><td class="n">${i + 2}</td><td>${t}</td><td></td><td>${chk('输出')}</td></tr>`).join('')}</tbody></table>
  <div class="wm"><b>激活 Windows</b>转到“设置”以激活 Windows。</div></div>
  <gd-scroll parts="0,72,12"></gd-scroll><div class="side"><div><button aria-label="展开"><gd-icon name="chev" size="9"></gd-icon></button><span>项目特征方案</span></div><div><button aria-label="展开"><gd-icon name="chev" size="9"></gd-icon></button><span>项目特征选项</span></div></div></div>`);

/* ---------- status bar ---------- */
define('gd-status-bar', `:host{height:32px;border-top:1px solid #d0d0d0;background:#f4f4f4}
.bar{display:flex;height:31px;align-items:center;padding:0 0 1px 9px}.i{padding-right:27px;margin-right:16px;border-right:1px solid #8f9aa5;white-space:nowrap}
.sc{width:80px;height:22px;background:var(--blue);color:#fff;border-radius:3px;margin-left:10px}
.z{margin-left:auto;display:flex;align-items:center}.v{width:22px;height:22px;border:1px solid #ccc;border-radius:3px;background:#fff;display:grid;place-items:center;margin-right:8px}.w{display:flex;margin-right:18px}.m{width:12px;height:3px;background:#555;margin:0 11px}
input{appearance:none;width:106px;height:14px;background:linear-gradient(#c4c4c4,#c4c4c4) center/100% 2px no-repeat}input::-webkit-slider-thumb{appearance:none;width:12px;height:12px;border:1px solid #555;border-radius:50%;background:#fff}.p{margin-right:-9px}`,
  `<div class="bar"><span class="i">计税方式：增值税（一般计税方法）</span><span class="i">工程量清单项目计量规范(2013-广东)</span><span class="i">广东省房屋建筑与装饰工程综合定额(2018)</span><span class="i">建筑工程</span><span class="i">一类地区</span><button class="sc">0分</button>
  <div class="z"><button class="v" aria-label="上下布局"><gd-icon name="stack" size="13"></gd-icon></button><button class="w" aria-label="左右布局"><gd-icon name="cols" size="13"></gd-icon></button><span>100%</span><button class="m" aria-label="缩小"></button><input type="range" aria-label="缩放" min="0" max="100" value="35"><button class="m p" aria-label="放大"></button></div></div>`);

define('gd-taskbar', `:host{height:5px;background:#1b1b1c}.bar{display:flex;padding-top:3px}i{height:2px}`,
  `<div class="bar"><i style="width:95px"></i><i style="width:144px;background:#eee"></i><i style="width:56px;background:#2a86f0"></i><i style="width:250px"></i><i style="width:46px;background:#444"></i></div>`);

/* ---------- application ---------- */
define('gd-app', `:host{display:flex;flex-direction:column;height:100vh;overflow:hidden}:host>*{flex:none}.work{flex:1 1 0;min-height:0;overflow:hidden;background:#fff}
gd-query-dialog{position:absolute;left:745px;top:265px;width:850px;height:560px;z-index:2}`,
  `<gd-title-bar></gd-title-bar><gd-menu-bar></gd-menu-bar><gd-ribbon></gd-ribbon><gd-page-tabs></gd-page-tabs><main class="work"><gd-bill-sheet></gd-bill-sheet></main><gd-detail-panel></gd-detail-panel><gd-status-bar></gd-status-bar><gd-taskbar></gd-taskbar><gd-query-dialog></gd-query-dialog>`);
</script>
</body>
</html>
